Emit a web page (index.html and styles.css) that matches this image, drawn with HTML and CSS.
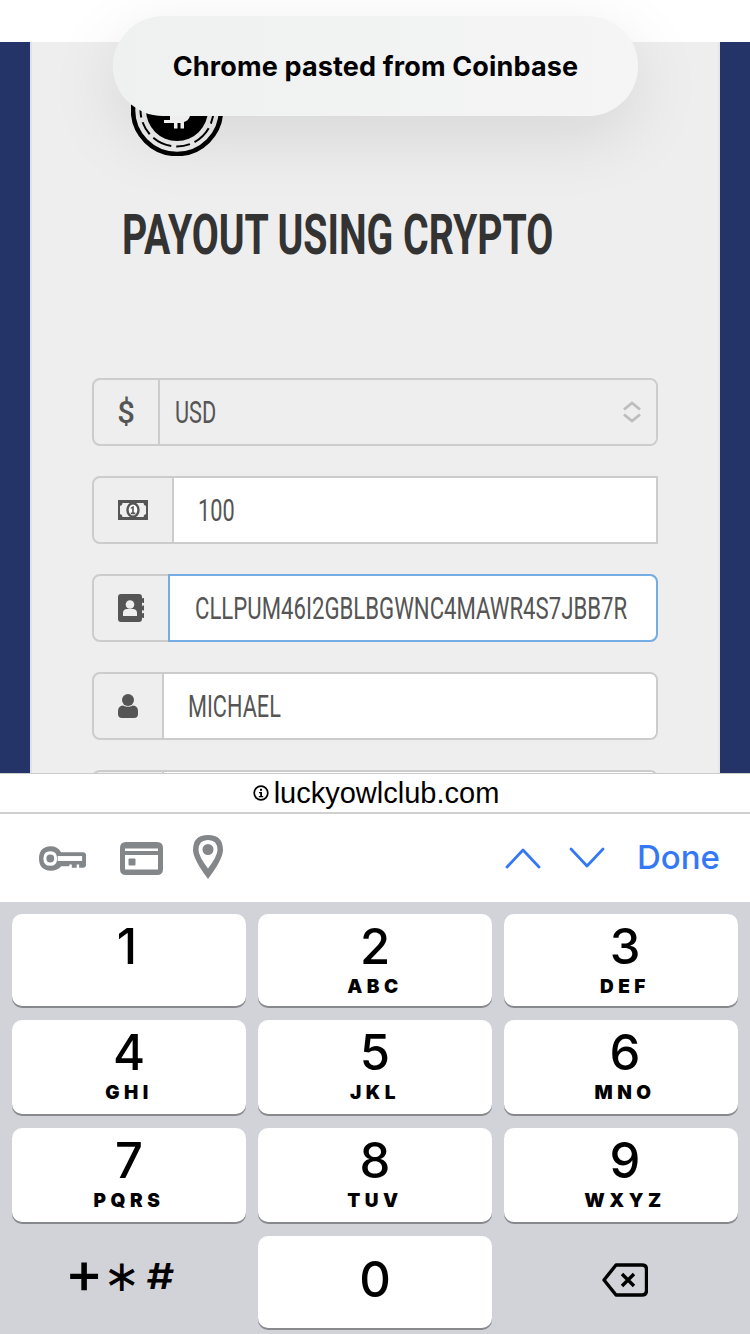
FILE: index.html
```html
<!DOCTYPE html>
<html lang="en">
<head>
    <meta charset="UTF-8">
    <meta name="viewport" content="width=device-width, initial-scale=1.0">
    <title>Payout using crypto</title>
    <link rel="stylesheet" href="styles.css">
</head>
<body>
    <div class="statusBar"></div>

    <div class="site">
        <div class="panel">
            <div class="coin">
                <svg width="92" height="92" viewBox="0 0 92 92">
                    <circle cx="46" cy="46" r="44" fill="#eee" stroke="#000" stroke-width="4.500"/>
                    <circle cx="46" cy="46" r="36.500" fill="none" stroke="#000" stroke-width="2" stroke-dasharray="14 5 20 5"/>
                    <circle cx="46" cy="46" r="31" fill="#000"/>
                    <path fill="#fff" d="M39 40H60Q61 56 53 58V64.500H49.500V59H46.500V64.500H43V59H33V56H39Z"/>
                </svg>
            </div>
            <h1><span>PAYOUT USING CRYPTO</span></h1>

            <div class="field">
                <span class="addon addon-usd"><span class="dollar">$</span></span>
                <div class="value value-select">
                    <span class="narrow">USD</span>
                    <svg class="updown" width="20" height="22" viewBox="0 0 20 22">
                        <path d="M2 8.500 L10 2 L18 8.500 M2 13.500 L10 20 L18 13.500" fill="none" stroke="#bdbdbd" stroke-width="2.800"/>
                    </svg>
                </div>
            </div>

            <div class="field field-square">
                <span class="addon addon-money">
                    <svg width="30" height="20" viewBox="0 0 30 20">
                        <path fill="#555" fill-rule="evenodd" d="M0 0H30V20H0Z M4.500 3Q4.500 5.500 2 6V14Q4.500 14.500 4.500 17H25.500Q25.500 14.500 28 14V6Q25.500 5.500 25.500 3Z"/>
                        <ellipse cx="15" cy="10" rx="5.500" ry="6.800" fill="#fff" stroke="#555" stroke-width="2.400"/>
                        <path fill="#555" d="M12.800 7.500L15.800 5.800V12.600H17.300V14.200H12.800V12.600H14.200V8.200L12.800 9Z"/>
                    </svg>
                </span>
                <div class="value"><span class="narrow">100</span></div>
            </div>

            <div class="field field-focus">
                <span class="addon addon-book">
                    <svg width="26" height="28" viewBox="0 0 26 28">
                        <path fill="#555" d="M3 0H21Q24 0 24 3V25Q24 28 21 28H3Q0 28 0 25V3Q0 0 3 0Z"/>
                        <rect x="24" y="4" width="2.500" height="5" rx="1" fill="#555"/>
                        <rect x="24" y="11.500" width="2.500" height="5" rx="1" fill="#555"/>
                        <rect x="24" y="19" width="2.500" height="5" rx="1" fill="#555"/>
                        <circle cx="12" cy="10.500" r="4.300" fill="#eee"/>
                        <path fill="#eee" d="M5 22V19Q5 15.500 8.500 15H15.500Q19 15.500 19 19V22Z"/>
                    </svg>
                </span>
                <div class="value"><span class="narrow narrow-long">CLLPUM46I2GBLBGWNC4MAWR4S7JBB7R</span></div>
            </div>

            <div class="field">
                <span class="addon addon-user">
                    <svg width="20" height="24" viewBox="0 0 20 24">
                        <circle cx="10" cy="6" r="6" fill="#555"/>
                        <path fill="#555" d="M0 20V17Q0 12 5 11.500Q10 14 15 11.500Q20 12 20 17V20Q20 24 16 24H4Q0 24 0 20Z"/>
                    </svg>
                </span>
                <div class="value"><span class="narrow">MICHAEL</span></div>
            </div>

            <div class="field">
                <span class="addon addon-user"></span>
                <div class="value"></div>
            </div>
        </div>
    </div>

    <div class="toast">Chrome pasted from Coinbase</div>

    <div class="bottom">
        <div class="urlBar">
            <svg width="16" height="16" viewBox="0 0 16 16">
                <circle cx="8" cy="8" r="6.800" fill="none" stroke="#000" stroke-width="1.700"/>
                <rect x="7" y="3.800" width="2" height="2" fill="#000"/>
                <path d="M6 7H9V11H10.200V12.200H5.800V11H7.200V8.200H6Z" fill="#000"/>
            </svg>
            <span>luckyowlclub.com</span>
        </div>

        <div class="toolbar">
            <div class="autofill">
                <svg width="47" height="25" viewBox="0 0 48 25">
                    <path fill="#83878a" fill-rule="evenodd" d="M12 0Q19 0 22.500 6H45Q48 6 48 9V19Q48 22 45 22H41V18.500H38.500V22H33.500V18.500H31V20.500H22.700Q19 25 12 25Q0 24.500 0 12.500Q0 .5 12 0Z M11.500 5Q4.500 5 4.500 12.500Q4.500 20 11.500 20Q18.500 20 18.500 12.500Q18.500 5 11.500 5Z"/>
                    <circle cx="11.500" cy="12.500" r="4" fill="#83878a"/>
                    <rect x="19" y="10" width="25" height="5" fill="#fff"/>
                </svg>
                <svg width="43" height="33" viewBox="0 0 43 33">
                    <path fill="#83878a" fill-rule="evenodd" d="M6 0H37Q43 0 43 6V27Q43 33 37 33H6Q0 33 0 27V6Q0 0 6 0Z M5 6.500V9H38V6.500Z M5 13V27.500H38V13Z"/>
                    <rect x="8.500" y="16.500" width="7" height="7" rx="1" fill="#83878a"/>
                </svg>
                <svg class="pin" width="32" height="44" viewBox="0 0 32 44">
                    <path fill="#83878a" fill-rule="evenodd" d="M16 0Q31 0 31 15Q31 24 16 44Q1 24 1 15Q1 0 16 0Z M16 5Q6.500 5 6.500 15Q6.500 21 16 33.500Q25.500 21 25.500 15Q25.500 5 16 5Z"/>
                    <circle cx="16" cy="14.500" r="5.500" fill="#83878a"/>
                </svg>
            </div>
            <div class="nav">
                <svg width="36" height="22" viewBox="0 0 36 22">
                    <path d="M2 20 L18 3 L34 20" fill="none" stroke="#3478f6" stroke-width="2.800" stroke-linecap="round" stroke-linejoin="round"/>
                </svg>
                <svg width="36" height="22" viewBox="0 0 36 22">
                    <path d="M2 2 L18 19 L34 2" fill="none" stroke="#3478f6" stroke-width="2.800" stroke-linecap="round" stroke-linejoin="round"/>
                </svg>
                <span class="done">Done</span>
            </div>
        </div>

        <div class="keyboard">
            <div class="key key-one"><span class="digit">1</span><span class="letters"></span></div>
            <div class="key"><span class="digit">2</span><span class="letters">ABC</span></div>
            <div class="key key-right"><span class="digit">3</span><span class="letters">DEF</span></div>
            <div class="key"><span class="digit">4</span><span class="letters">GHI</span></div>
            <div class="key"><span class="digit">5</span><span class="letters">JKL</span></div>
            <div class="key key-right"><span class="digit">6</span><span class="letters">MNO</span></div>
            <div class="key"><span class="digit">7</span><span class="letters">PQRS</span></div>
            <div class="key"><span class="digit">8</span><span class="letters">TUV</span></div>
            <div class="key key-right"><span class="digit">9</span><span class="letters">WXYZ</span></div>
            <div class="key key-flat symbols"><span class="plus">+</span><span class="star">∗</span><span class="hash">#</span></div>
            <div class="key key-zero"><span class="digit">0</span></div>
            <div class="key key-flat key-right">
                <svg class="backspace" width="46" height="34" viewBox="0 0 46 34">
                    <path d="M14 2H40Q44.500 2 44.500 6.500V27.500Q44.500 32 40 32H14L2 17Z" fill="none" stroke="#000" stroke-width="3.400" stroke-linejoin="round"/>
                    <path d="M20 11L32 23M32 11L20 23" fill="none" stroke="#000" stroke-width="3.400"/>
                </svg>
            </div>
        </div>
    </div>
</body>
</html>
```

FILE: styles.css
```css
* {
    box-sizing: border-box;
}
body {
    margin: 0;
    width: 750px;
    height: 1334px;
    overflow: hidden;
    position: relative;
    display: flex;
    flex-direction: column;
    background: #fff;
    font-family: Inter, 'Liberation Sans', sans-serif;
}
.statusBar {
    height: 42px;
    flex: none;
    background: #fff;
}
.site {
    flex: none;
    height: 731px;
    overflow: hidden;
    background: #243468;
    padding: 0 30px;
}
.panel {
    height: 100%;
    background: #eee;
    border-left: 2px solid #e0e2e8;
    border-right: 2px solid #e6e6ea;
    padding: 8px 60px 0 60px;
}
.coin {
    margin-left: 39px;
    height: 106px;
    display: flex;
    align-items: flex-end;
}
h1 {
    margin: 46px 0 0 30px;
    height: 66px;
    font-family: Roboto, 'Liberation Sans', sans-serif;
    font-size: 56px;
    line-height: 66px;
    font-weight: 700;
    color: #333;
    white-space: nowrap;
}
h1 span {
    display: inline-block;
    transform: scaleX(0.7);
    transform-origin: left center;
}
.field {
    display: flex;
    height: 68px;
    margin-bottom: 30px;
    border: 2px solid #ccc;
    border-radius: 8px;
    font-family: Roboto, 'Liberation Sans', sans-serif;
    font-size: 31px;
    color: #555;
    background: #eee;
}
h1 + .field {
    margin-top: 110px;
}
.addon {
    flex: none;
    display: flex;
    align-items: center;
    justify-content: center;
    border-right: 2px solid #ccc;
}
.addon-usd { width: 66px; }
.addon-money { width: 80px; }
.addon-book { width: 74px; border-right: 0; }
.addon-user { width: 70px; }
.dollar {
    font-size: 31px;
    font-weight: 500;
}
.value {
    flex: 1;
    min-width: 0;
    display: flex;
    align-items: center;
    padding-left: 24px;
    background: #fff;
    border-radius: 0 6px 6px 0;
    white-space: nowrap;
}
.narrow {
    flex: none;
    display: inline-block;
    transform: scaleX(0.7);
    transform-origin: left center;
}
.narrow-long {
    transform: scaleX(0.715);
}
.value-select {
    justify-content: space-between;
    padding: 0 14px 0 15px;
    background: #eee;
}
.field-square {
    border-radius: 8px 0 0 8px;
}
.field-square .value {
    border-radius: 0;
}
.field-focus .value {
    margin: -2px -2px -2px 0;
    border: 2px solid #74ade4;
    border-radius: 0 8px 8px 0;
    padding-left: 25px;
}
.toast {
    position: absolute;
    top: 16px;
    left: 113px;
    width: 525px;
    height: 100px;
    border-radius: 50px;
    background: linear-gradient(90deg, #eff0f0, #f5f5f5);
    box-shadow: 0 20px 70px rgba(0, 0, 0, 0.1);
    display: flex;
    align-items: center;
    justify-content: center;
    font-size: 27px;
    font-weight: 700;
    letter-spacing: 0.15px;
    color: #000;
}
.bottom {
    flex: none;
    height: 561px;
    display: flex;
    flex-direction: column;
    background: #fff;
    border-top: 1px solid #ccc;
}
.urlBar {
    height: 40px;
    flex: none;
    display: flex;
    align-items: center;
    justify-content: center;
    gap: 5px;
    padding-left: 2px;
    font-family: 'Liberation Sans', sans-serif;
    font-size: 29px;
    color: #000;
    border-bottom: 2px solid #d0d0d0;
}
.toolbar {
    height: 88px;
    flex: none;
    display: flex;
    align-items: center;
    justify-content: space-between;
    padding: 0 30px 0 39px;
}
.autofill {
    display: flex;
    align-items: center;
    gap: 34px;
}
.pin {
    margin-left: -5px;
    margin-top: -2px;
}
.nav {
    display: flex;
    align-items: center;
    gap: 28px;
}
.done {
    margin-left: 4px;
    font-size: 33px;
    font-weight: 500;
    line-height: 40px;
    padding-bottom: 2px;
    color: #3478f6;
}
.keyboard {
    flex: 1;
    display: grid;
    grid-template-columns: repeat(3, 234px);
    grid-template-rows: 92px 94px 94px 92px;
    column-gap: 12px;
    row-gap: 14px;
    padding: 12px 12px 0;
    background: #d2d3d8;
}
.key {
    display: flex;
    flex-direction: column;
    align-items: center;
    background: #fff;
    border-radius: 10px;
    box-shadow: 0 2px 0 #88898d;
    color: #000;
}
.key-one {
    padding-right: 4px;
}
.key-right {
    padding-left: 8px;
}
.key-flat {
    background: none;
    box-shadow: none;
    justify-content: center;
}
.digit {
    height: 56px;
    margin-top: 5px;
    font-size: 49px;
    line-height: 56px;
    font-weight: 500;
}
.letters {
    margin-top: 1px;
    font-size: 19px;
    line-height: 22px;
    font-weight: 900;
    letter-spacing: 4.500px;
}
.key-zero .digit {
    margin-top: 16px;
}
.symbols {
    flex-direction: row;
    gap: 10px;
    padding: 0 14px 12px 0;
    line-height: 40px;
    font-weight: 500;
}
.symbols span {
    display: flex;
    justify-content: center;
}
.plus {
    width: 29px;
    font-size: 58px;
    margin-bottom: 8px;
}
.star {
    width: 27px;
    font-family: 'DejaVu Sans', sans-serif;
    font-size: 44px;
}
.hash {
    width: 29px;
    font-size: 36px;
    font-weight: 600;
    transform: scaleX(1.2);
}
.backspace {
    margin-bottom: 4px;
}
```
